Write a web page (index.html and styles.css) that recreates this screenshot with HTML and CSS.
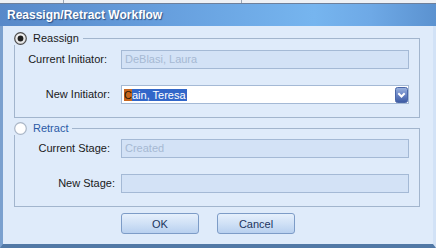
FILE: index.html
```html
<!DOCTYPE html>
<html>
<head>
<meta charset="utf-8">
<link rel="stylesheet" href="styles.css">
</head>
<body>
<div class="window">
  <div class="topstrip"><span class="seg seg1"></span><span class="seg seg2"></span><span class="seg seg3"></span></div>
  <div class="titlebar">Reassign/Retract Workflow</div>
  <div class="body">
    <fieldset class="group">
      <legend class="legend">
        <svg class="radio" width="13" height="13" viewBox="0 0 13 13">
          <defs><radialGradient id="rg1" cx="50%" cy="40%" r="60%"><stop offset="0" stop-color="#ffffff"/><stop offset="1" stop-color="#dcdcdc"/></radialGradient></defs>
          <circle cx="6.5" cy="6.5" r="5.8" fill="url(#rg1)" stroke="#4d4d4d" stroke-width="1.2"/>
          <circle cx="6.5" cy="6.5" r="2.9" fill="#1e1e1e"/>
        </svg>
        <span class="legend-text">Reassign</span>
      </legend>
      <div class="rows">
        <label class="lbl lbl-ci">Current Initiator:</label>
        <div class="field disabled">DeBlasi, Laura</div>
        <label class="lbl lbl-ni">New Initiator:</label>
        <div class="field combo">
          <span class="caret">C</span><span class="sel">ain, Teresa</span>
          <svg class="dd" width="13" height="16" viewBox="0 0 13 16">
            <defs><linearGradient id="dg" x1="0" y1="0" x2="0" y2="1"><stop offset="0" stop-color="#9db5e0"/><stop offset="0.5" stop-color="#6883c4"/><stop offset="1" stop-color="#3c5aa2"/></linearGradient></defs>
            <rect x="0.5" y="0.5" width="12" height="15" rx="2" fill="url(#dg)" stroke="#4b67a8"/>
            <path d="M3.3 6.3 L6.5 9.5 L9.7 6.3" fill="none" stroke="#ffffff" stroke-width="2"/>
          </svg>
        </div>
      </div>
    </fieldset>
    <fieldset class="group group2">
      <legend class="legend">
        <svg class="radio" width="13" height="13" viewBox="0 0 13 13">
          <circle cx="6.5" cy="6.5" r="5.8" fill="#ffffff" stroke="#aab6c6" stroke-width="1.2"/>
        </svg>
        <span class="legend-text blue">Retract</span>
      </legend>
      <div class="rows">
        <label class="lbl lbl-cs">Current Stage:</label>
        <div class="field disabled">Created</div>
        <label class="lbl lbl-ns">New Stage:</label>
        <div class="field disabled"></div>
      </div>
    </fieldset>
    <div class="buttons">
      <button class="btn">OK</button>
      <button class="btn">Cancel</button>
    </div>
  </div>
</div>
</body>
</html>
```

FILE: styles.css
```css
* { box-sizing: border-box; }
html, body { margin: 0; padding: 0; }
body {
  width: 436px;
  height: 248px;
  overflow: hidden;
  font-family: "Liberation Sans", Arial, sans-serif;
  font-size: 11px;
  color: #1a1a1a;
}
.window {
  width: 436px;
  height: 248px;
  display: flex;
  flex-direction: column;
}
.topstrip {
  height: 4px;
  background: #eef1f5;
  border-bottom: 1px solid #6e809b;
  display: flex;
}
.seg { height: 3px; border-right: 1px solid #9aa6b6; }
.seg1 { width: 64px; }
.seg2 { width: 178px; }
.seg3 { flex: 1; border-right: none; }
.titlebar {
  height: 22px;
  line-height: 22px;
  padding-left: 7px;
  color: #ffffff;
  font-weight: bold;
  font-size: 12px;
  text-shadow: 1px 1px 1px rgba(28, 56, 104, 0.75);
  background: linear-gradient(90deg, #5889c9 0%, #659ddc 35%, #76b5ef 72%, #6ea9e6 85%, #5b92d0 100%);
}
.body {
  flex: 1;
  background: #dfebfa;
  border-left: 3px solid #7ba1cf;
  border-right: 3px solid #d2e2f6;
  border-bottom: 4px solid #5279a6;
  padding: 6px 0 0 11px;
}
.group {
  margin: 0;
  width: 406px;
  min-width: 0;
  border: 1px solid #a2b5cd;
  padding: 5px 10px 13px 0;
}
.group2 { margin-top: 4px; padding-top: 4px; }
.legend {
  display: flex;
  align-items: center;
  height: 13px;
  padding: 0 4px 0 0;
  margin-left: -1px;
  gap: 6px;
}
.radio { display: block; }
.legend-text { line-height: 13px; }
.legend-text.blue { color: #2b5aa6; }
.rows {
  display: grid;
  grid-template-columns: 106px 288px;
  grid-auto-rows: 19px;
  row-gap: 16px;
  align-items: center;
}
.lbl { text-align: right; line-height: 19px; }
.lbl-ci { padding-right: 14px; }
.lbl-ni { padding-right: 11px; }
.lbl-cs { padding-right: 11px; }
.lbl-ns { padding-right: 6px; }
.field {
  height: 19px;
  border: 1px solid #a4b9d5;
  line-height: 17px;
  padding-left: 3px;
}
.disabled {
  background: #d3e2f6;
  color: #a6b9d3;
}
.combo {
  background: #ffffff;
  display: flex;
  align-items: center;
  padding-left: 2px;
  color: #ffffff;
}
.caret {
  background: #c8661f;
  color: #2a1a0a;
  line-height: 12px;
  height: 12px;
}
.sel {
  background: #3267c9;
  color: #ffffff;
  line-height: 12px;
  height: 12px;
  padding-right: 1px;
}
.dd { margin-left: auto; display: block; }
.buttons {
  margin-top: 6px;
  margin-left: 107px;
  display: flex;
  gap: 18px;
}
.btn {
  width: 78px;
  height: 21px;
  padding: 0;
  font-family: "Liberation Sans", Arial, sans-serif;
  font-size: 11px;
  color: #1c3560;
  border: 1px solid #7d9cc7;
  border-radius: 3px;
  background: linear-gradient(180deg, #e6f0fc 0%, #d0e1f6 50%, #b8d0ef 100%);
}
```
